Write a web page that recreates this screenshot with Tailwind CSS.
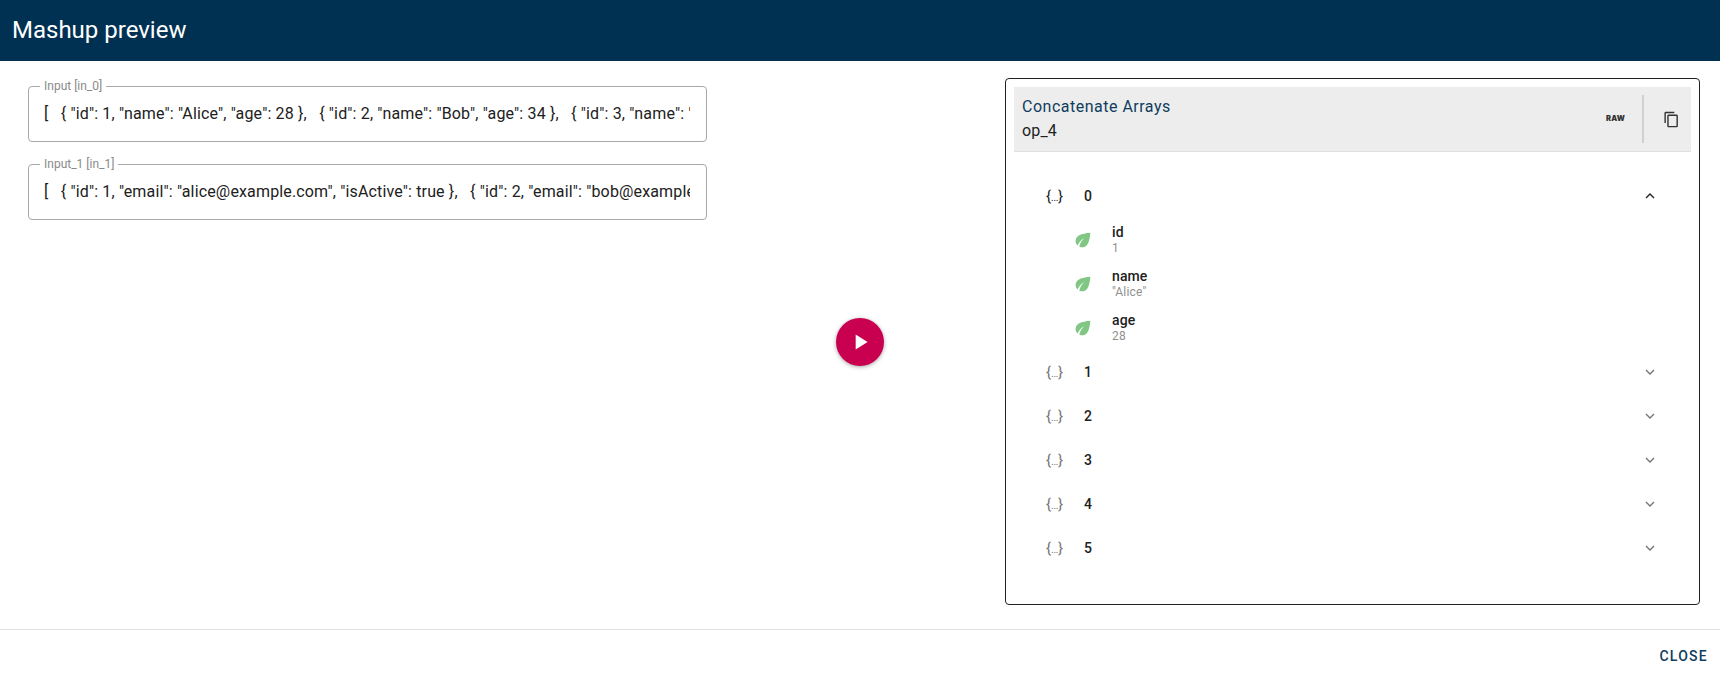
<!DOCTYPE html>
<html>
<head>
<meta charset="utf-8">
<script src="https://cdn.jsdelivr.net/npm/@tailwindcss/browser@4"></script>
</head>
<body class="m-0 bg-white font-['Roboto',sans-serif] text-[#212121] overflow-hidden">
<div class="w-[1720px] h-[677px] flex flex-col">
  <header class="h-[61px] shrink-0 bg-[#003152] flex items-center pl-3 pb-[1px] text-white text-[24px] leading-none">Mashup preview</header>
  <main class="h-[568px] shrink-0 flex">
    <section class="w-[735px] pl-[28px] pt-[24.5px] flex flex-col gap-[22px]">
      <fieldset class="w-[679px] h-[61px] -mt-[5px] border border-[#a8a8a8] rounded px-[15px] pb-0 min-w-0">
        <legend class="-ml-[4px] px-[4px] text-[12px] leading-[11px] text-[#8a8a8a]">Input [in_0]</legend>
        <div class="whitespace-pre overflow-hidden w-[646px] text-[16px] leading-[20px] mt-[12px] tracking-[0.15px]">[   { "id": 1, "name": "Alice", "age": 28 },   { "id": 2, "name": "Bob", "age": 34 },   { "id": 3, "name": "Charlie", "age": 22 }</div>
      </fieldset>
      <fieldset class="w-[679px] h-[61px] -mt-[5px] border border-[#a8a8a8] rounded px-[15px] pb-0 min-w-0">
        <legend class="-ml-[4px] px-[4px] text-[12px] leading-[11px] text-[#8a8a8a]">Input_1 [in_1]</legend>
        <div class="whitespace-pre overflow-hidden w-[646px] text-[16px] leading-[20px] mt-[12px] tracking-[0.15px]">[   { "id": 1, "email": "alice@example.com", "isActive": true },   { "id": 2, "email": "bob@example.com", "isActive": false }</div>
      </fieldset>
    </section>
    <section class="w-[270px] flex justify-start pl-[101px] items-start pt-[257px]">
      <button class="w-[48px] h-[48px] rounded-full bg-[#c8004f] shadow-[0_1px_4px_rgba(0,0,0,0.35)] flex items-center justify-center">
        <svg width="26" height="26" viewBox="0 0 24 24" fill="#fff"><path d="M8 5v14l11-7z"/></svg>
      </button>
    </section>
    <section class="w-[695px] h-[527px] mt-[17px] border border-[#212121] rounded p-[8px] flex flex-col">
      <div class="h-[65px] shrink-0 bg-[#ededed] border-b border-[#e0e0e0] flex items-center pl-[8px]">
        <div class="flex-1 flex flex-col">
          <span class="text-[#0f3d5e] text-[16px] leading-[20px] tracking-[0.5px] mb-[4px]">Concatenate Arrays</span>
          <span class="text-[16px] leading-[20px] tracking-[0.15px] font-[450]">op_4</span>
        </div>
        <span class="font-['Inter',sans-serif] font-black text-[7.5px] tracking-[0.2px] mr-[17px] text-[#333]">RAW</span>
        <div class="w-[2px] h-[48px] bg-[#d0d0d0]"></div>
        <div class="w-[47px] flex justify-start pl-[19px]">
          <svg width="17" height="17" viewBox="0 0 24 24" fill="#333"><path d="M16 1H4c-1.100 0-2 .9-2 2v14h2V3h12V1zm3 4H8c-1.100 0-2 .9-2 2v14c0 1.100.9 2 2 2h11c1.100 0 2-.9 2-2V7c0-1.100-.9-2-2-2zm0 16H8V7h11v14z"/></svg>
        </div>
      </div>
      <div class="pt-[22px] pl-[32px] pr-[33px] flex flex-col">
        <div class="h-[44px] flex items-center">
          <span class="w-[38px] text-[15px] leading-none text-[#212121]">{<span class="text-[10px] tracking-[-0.3px]">...</span>}</span>
          <span class="flex-1 font-[470] text-[14px] tracking-[0.1px]">0</span>
          <svg width="16" height="16" viewBox="0 0 24 24" fill="none" stroke="#212121" stroke-width="2"><path d="M6 15l6-6 6 6"/></svg>
        </div>
        <div class="h-[44px] flex items-center pl-[26px]">
          <svg class="w-[22px] h-[22px] mr-[18px]" viewBox="0 0 24 24" fill="#81c784"><path d="M6.050 8.050c-2.730 2.730-2.730 7.150-.020 9.880 1.470-3.400 4.090-6.240 7.360-7.930-2.770 2.340-4.710 5.610-5.390 9.320 2.600 1.230 5.800.780 7.950-1.370C19.430 14.470 20 4 20 4S9.530 4.570 6.050 8.050z"/></svg>
          <div class="flex flex-col"><span class="text-[14px] leading-[16px] tracking-[0.1px] font-[470]">id</span><span class="text-[12px] leading-[16px] tracking-[0.2px] text-[#8f8f8f]">1</span></div>
        </div>
        <div class="h-[44px] flex items-center pl-[26px]">
          <svg class="w-[22px] h-[22px] mr-[18px]" viewBox="0 0 24 24" fill="#81c784"><path d="M6.050 8.050c-2.730 2.730-2.730 7.150-.020 9.880 1.470-3.400 4.090-6.240 7.360-7.930-2.770 2.340-4.710 5.610-5.390 9.320 2.600 1.230 5.800.780 7.950-1.370C19.430 14.470 20 4 20 4S9.530 4.570 6.050 8.050z"/></svg>
          <div class="flex flex-col"><span class="text-[14px] leading-[16px] tracking-[0.1px] font-[470]">name</span><span class="text-[12px] leading-[16px] tracking-[0.2px] text-[#8f8f8f]">"Alice"</span></div>
        </div>
        <div class="h-[44px] flex items-center pl-[26px]">
          <svg class="w-[22px] h-[22px] mr-[18px]" viewBox="0 0 24 24" fill="#81c784"><path d="M6.050 8.050c-2.730 2.730-2.730 7.150-.020 9.880 1.470-3.400 4.090-6.240 7.360-7.930-2.770 2.340-4.710 5.610-5.390 9.320 2.600 1.230 5.800.780 7.950-1.370C19.430 14.470 20 4 20 4S9.530 4.570 6.050 8.050z"/></svg>
          <div class="flex flex-col"><span class="text-[14px] leading-[16px] tracking-[0.1px] font-[470]">age</span><span class="text-[12px] leading-[16px] tracking-[0.2px] text-[#8f8f8f]">28</span></div>
        </div>
        <div class="h-[44px] flex items-center text-[14px]"><span class="w-[38px] text-[15px] leading-none text-[#757575]">{<span class="text-[10px] tracking-[-0.3px]">...</span>}</span><span class="flex-1 font-[470]">1</span><svg width="16" height="16" viewBox="0 0 24 24" fill="none" stroke="#757575" stroke-width="2"><path d="M6 9l6 6 6-6"/></svg></div>
        <div class="h-[44px] flex items-center text-[14px]"><span class="w-[38px] text-[15px] leading-none text-[#757575]">{<span class="text-[10px] tracking-[-0.3px]">...</span>}</span><span class="flex-1 font-[470]">2</span><svg width="16" height="16" viewBox="0 0 24 24" fill="none" stroke="#757575" stroke-width="2"><path d="M6 9l6 6 6-6"/></svg></div>
        <div class="h-[44px] flex items-center text-[14px]"><span class="w-[38px] text-[15px] leading-none text-[#757575]">{<span class="text-[10px] tracking-[-0.3px]">...</span>}</span><span class="flex-1 font-[470]">3</span><svg width="16" height="16" viewBox="0 0 24 24" fill="none" stroke="#757575" stroke-width="2"><path d="M6 9l6 6 6-6"/></svg></div>
        <div class="h-[44px] flex items-center text-[14px]"><span class="w-[38px] text-[15px] leading-none text-[#757575]">{<span class="text-[10px] tracking-[-0.3px]">...</span>}</span><span class="flex-1 font-[470]">4</span><svg width="16" height="16" viewBox="0 0 24 24" fill="none" stroke="#757575" stroke-width="2"><path d="M6 9l6 6 6-6"/></svg></div>
        <div class="h-[44px] flex items-center text-[14px]"><span class="w-[38px] text-[15px] leading-none text-[#757575]">{<span class="text-[10px] tracking-[-0.3px]">...</span>}</span><span class="flex-1 font-[470]">5</span><svg width="16" height="16" viewBox="0 0 24 24" fill="none" stroke="#757575" stroke-width="2"><path d="M6 9l6 6 6-6"/></svg></div>
      </div>
    </section>
  </main>
  <footer class="h-[48px] flex-1 border-t border-[#e0e0e0] flex items-center justify-end pr-[12px] pt-[6px]">
    <span class="text-[#0f3d5e] text-[14px] font-medium tracking-[1.25px]">CLOSE</span>
  </footer>
</div>
</body>
</html>
